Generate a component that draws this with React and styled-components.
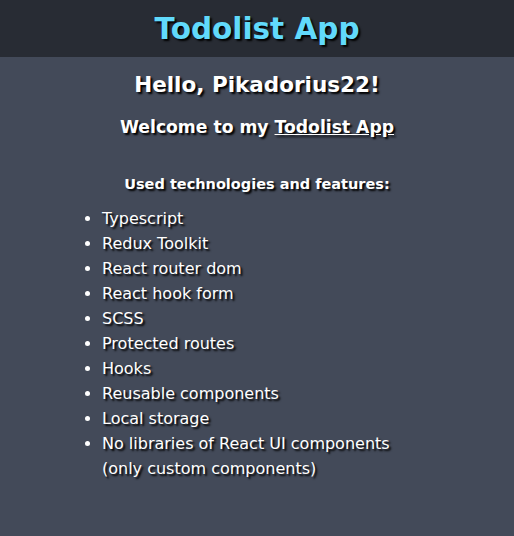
import React from "react";
import styled, { createGlobalStyle } from "styled-components";

const Global = createGlobalStyle`
  html, body { margin: 0; padding: 0; background: #434a59; }
  body { font-family: "DejaVu Sans", "Noto Sans", sans-serif; color: #fff; }
  * { box-sizing: border-box; }
`;

const Page = styled.div`
  min-height: 536px;
  background: #434a59;
  display: flex;
  flex-direction: column;
`;

const Header = styled.header`
  height: 57px;
  background: #282c34;
  display: flex;
  align-items: center;
  justify-content: center;
`;

const Logo = styled.h1`
  margin: 0;
  font-size: 29.5px;
  font-weight: 700;
  color: #61dafb;
  text-shadow: 2px 2px 2px #000;
`;

const Main = styled.main`
  display: flex;
  flex-direction: column;
  align-items: center;
  padding-top: 15px;
  text-shadow: 2px 2px 2px #000;
`;

const Hello = styled.h2`
  margin: 0;
  font-size: 21.5px;
  font-weight: 700;
`;

const Welcome = styled.h3`
  margin: 20px 0 0;
  font-size: 17.2px;
  font-weight: 700;
  & u { text-decoration: underline; }
`;

const Subtitle = styled.h4`
  margin: 39px 0 0;
  font-size: 14.5px;
  font-weight: 700;
`;

const List = styled.ul`
  margin: 14px 0 0;
  padding-left: 40px;
  width: 370px;
  align-self: flex-start;
  margin-left: 62px;
  padding-right: 10px;
`;

const Item = styled.li`
  font-size: 16px;
  line-height: 25px;
`;

const items = [
  "Typescript",
  "Redux Toolkit",
  "React router dom",
  "React hook form",
  "SCSS",
  "Protected routes",
  "Hooks",
  "Reusable components",
  "Local storage",
  "No libraries of React UI components (only custom components)",
];

export default function App() {
  return (
    <Page>
      <Global />
      <Header>
        <Logo>Todolist App</Logo>
      </Header>
      <Main>
        <Hello>Hello, Pikadorius22!</Hello>
        <Welcome>
          Welcome to my <u>Todolist App</u>
        </Welcome>
        <Subtitle>Used technologies and features:</Subtitle>
        <List>
          {items.map((t) => (
            <Item key={t}>{t}</Item>
          ))}
        </List>
      </Main>
    </Page>
  );
}
